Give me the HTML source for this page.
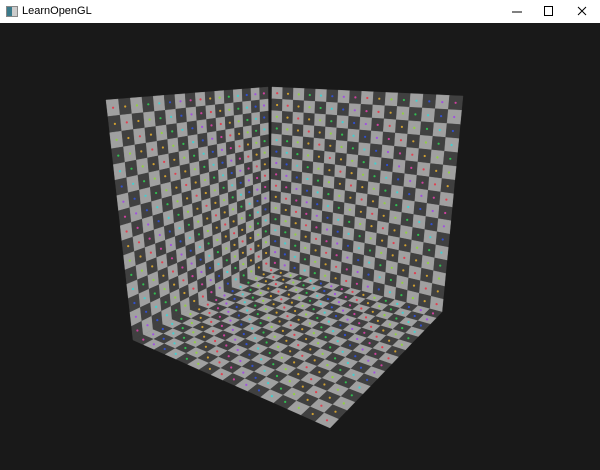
<!DOCTYPE html>
<html><head><style>
body{margin:0;width:600px;height:470px;background:#191919;overflow:hidden;font-family:"Liberation Sans",sans-serif}
#tb{position:absolute;left:0;top:0;width:600px;height:23px;background:#fff}
#tb span{position:absolute;left:22px;top:5px;font-size:11px;color:#000}
#ic{position:absolute;left:6px;top:6px;width:10px;height:9px;border:1px solid #888;background:linear-gradient(90deg,#3a7a8a 50%,#ccc 50%)}
svg{position:absolute;left:0;top:0}
</style></head><body>
<div id="tb"><div id="ic"></div><span>LearnOpenGL</span>
<svg width="600" height="23"><path d="M512 12h10" stroke="#000"/><rect x="544.5" y="6.5" width="8" height="9" fill="none" stroke="#000"/><path d="M578 7l8 8M586 7l-8 8" stroke="#000"/></svg></div>
<svg id="s" width="600" height="470" style="top:0"></svg>
<script>
function H(q){var[x0,y0]=q[0],[x1,y1]=q[1],[x2,y2]=q[2],[x3,y3]=q[3];
var dx1=x1-x2,dx2=x3-x2,dy1=y1-y2,dy2=y3-y2,sx=x0-x1+x2-x3,sy=y0-y1+y2-y3;
var d=dx1*dy2-dx2*dy1,g=(sx*dy2-dx2*sy)/d,h=(dx1*sy-sx*dy1)/d;
var a=x1-x0+g*x1,b=x3-x0+h*x3,c=x0,dd=y1-y0+g*y1,e=y3-y0+h*y3,f=y0;
return function(u,v){var w=g*u+h*v+1;return[(a*u+b*v+c)/w,(dd*u+e*v+f)/w]}}
function B(q){return function(u,v){var x=(1-u)*(1-v)*q[0][0]+u*(1-v)*q[1][0]+u*v*q[2][0]+(1-u)*v*q[3][0];
var y=(1-u)*(1-v)*q[0][1]+u*(1-v)*q[1][1]+u*v*q[2][1]+(1-u)*v*q[3][1];return[x,y]}}
function M(q,t){var h=H(q),b=B(q);return function(u,v){var p=h(u,v),r=b(u,v);return[p[0]*t+r[0]*(1-t),p[1]*t+r[1]*(1-t)]}}
var out='',cols=['#e04050','#d0a030','#90d040','#30c050','#40d0d0','#3050d0','#a050e0','#d040a0'];
function face(q,n,t){var m=M(q,t);for(var i=0;i<n;i++)for(var j=0;j<n;j++){
var p=[m(i/n,j/n),m((i+1)/n,j/n),m((i+1)/n,(j+1)/n),m(i/n,(j+1)/n)];var f=((i+j)%2?'#404040':'#a0a0a0');
out+='<polygon points="'+p.map(t=>t[0].toFixed(1)+','+t[1].toFixed(1)).join(' ')+'" fill="'+f+'" stroke="'+f+'" stroke-width="0.4"/>';
var c=m((i+.5)/n,(j+.5)/n);out+='<circle cx="'+c[0].toFixed(1)+'" cy="'+c[1].toFixed(1)+'" r="1.1" fill="'+cols[Math.abs(i-j)%8]+'"/>';}}
face([[106,100],[268,87],[270,267],[133,340]],16,0.6);
face([[272,87],[463,96],[442,312],[270,267]],16,0.6);
face([[270,267],[442,312],[330,428],[133,340]],16,0.6);
document.getElementById('s').innerHTML=out;
</script>
</body></html>
